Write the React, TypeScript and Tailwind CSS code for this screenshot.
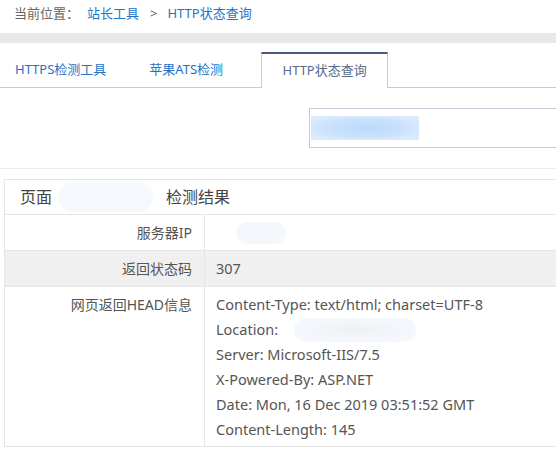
import React from 'react';

const headLines = [
  'Content-Type: text/html; charset=UTF-8',
  'LOCATION',
  'Server: Microsoft-IIS/7.5',
  'X-Powered-By: ASP.NET',
  'Date: Mon, 16 Dec 2019 03:51:52 GMT',
  'Content-Length: 145',
];

function Blur({ className }: { className: string }) {
  return <span className={'inline-block rounded-full ' + className} />;
}

export default function App() {
  return (
    <div className="w-[556px] h-[451px] overflow-hidden bg-white text-[#555] font-['Noto_Sans','Noto_Sans_CJK_SC',sans-serif]">
      {/* 面包屑 */}
      <div className="h-[33px] pl-[14px] pt-[4px] flex items-start text-[13px] leading-[18px] whitespace-nowrap">
        <span className="text-[#666]">当前位置：</span>
        <span className="ml-[8px] text-[#2474c6]">站长工具</span>
        <span className="ml-[11px] text-[#666]">&gt;</span>
        <span className="ml-[10px] text-[#2474c6]">HTTP状态查询</span>
      </div>
      <div className="h-[10px] bg-[#e8e8e8]" />

      {/* 选项卡 */}
      <div className="mt-[10px] flex items-end h-[35px] border-b border-[#c5cad6] text-[13px] whitespace-nowrap">
        <div className="ml-[15px] h-[34px] flex items-center text-[#2474c6]">HTTPS检测工具</div>
        <div className="ml-[43px] h-[34px] flex items-center text-[#2474c6]">苹果ATS检测</div>
        <div className="ml-[38px] w-[127px] h-[36px] -mb-px flex items-center justify-center bg-white border-t-2 border-t-[#4b5b7c] border-x border-x-[#c5cad6] text-[#5a6a8a]">
          HTTP状态查询
        </div>
      </div>

      {/* 查询框 */}
      <div className="h-[81px] pt-[20px] pl-[309px] border-b border-[#ececec]">
        <div className="w-[400px] h-[40px] border border-[#c5cad6] flex items-center pl-[1px]">
          <span className="w-[108px] h-[24px] bg-[radial-gradient(ellipse_at_center,#bcd9fb_0%,#c8e0fc_45%,#e3effd_100%)]" />
        </div>
      </div>

      {/* 检测结果 */}
      <div className="ml-[4px] mt-[10px] w-[600px] border border-[#e6e6e6]">
        <div className="h-[35px] flex items-center pl-[15px] text-[16px] text-[#444] border-b border-[#e6e6e6] whitespace-nowrap">
          <span>页面</span>
          <Blur className="ml-[6px] w-[95px] h-[29px] bg-[#f5f8fc]" />
          <span className="ml-[13px]">检测结果</span>
        </div>
        <div className="flex h-[36px] border-b border-[#e6e6e6] text-[14px]">
          <div className="w-[200px] pr-[12px] flex items-center justify-end border-r border-[#e6e6e6]">服务器IP</div>
          <div className="flex-1 pl-[31px] flex items-center">
            <Blur className="w-[50px] h-[22px] bg-[#f4f8fd]" />
          </div>
        </div>
        <div className="flex h-[36px] border-b border-[#e6e6e6] bg-[#f0f0f0] text-[14px]">
          <div className="w-[200px] pr-[12px] flex items-center justify-end border-r border-[#e6e6e6]">返回状态码</div>
          <div className="flex-1 pl-[11px] flex items-center text-[14.5px]">307</div>
        </div>
        <div className="flex h-[159px] text-[14px] leading-[25px]">
          <div className="w-[200px] pr-[12px] pt-[5px] text-right border-r border-[#e6e6e6]">网页返回HEAD信息</div>
          <div className="flex-1 pl-[11px] pt-[5px] text-[14.5px] whitespace-nowrap">
            {headLines.map((l) =>
              l === 'LOCATION' ? (
                <div key={l} className="flex items-center">
                  <span>Location:</span>
                  <Blur className="ml-[16px] w-[122px] h-[24px] bg-[radial-gradient(ellipse_at_center,#eef0f3_0%,#f3f6fa_50%,#f6f9fd_100%)]" />
                </div>
              ) : (
                <div key={l}>{l}</div>
              )
            )}
          </div>
        </div>
      </div>
    </div>
  );
}
